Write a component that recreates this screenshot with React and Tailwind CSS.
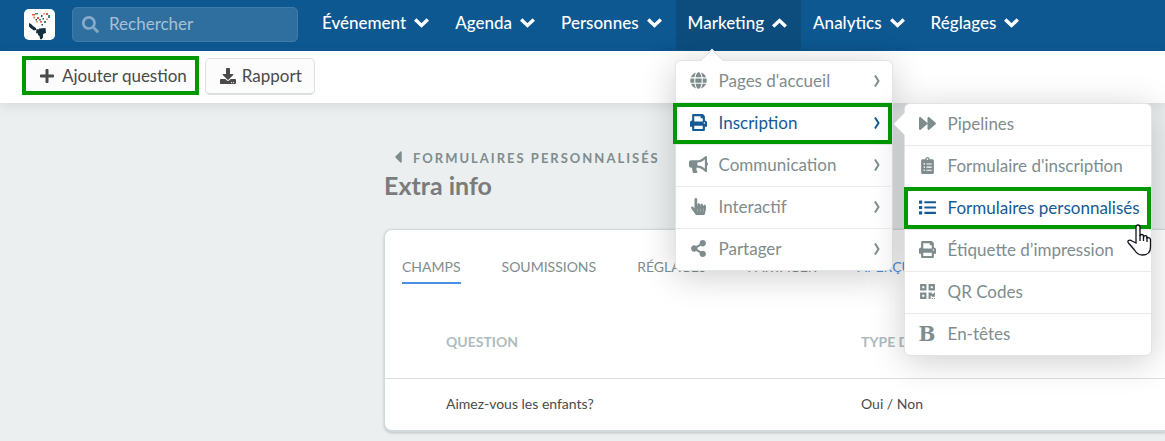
import { FaBullhorn, FaCaretLeft, FaClipboardList, FaDownload, FaForward, FaGlobe, FaHandPointer, FaList, FaPlus, FaPrint, FaQrcode, FaSearch, FaShareAlt } from 'react-icons/fa';
import clsx from 'clsx';

const navItems = ['Événement', 'Agenda', 'Personnes', 'Marketing', 'Analytics', 'Réglages'];

const marketingMenu = [
  { label: "Pages d'accueil", icon: FaGlobe },
  { label: 'Inscription', icon: FaPrint, active: true },
  { label: 'Communication', icon: FaBullhorn },
  { label: 'Interactif', icon: FaHandPointer },
  { label: 'Partager', icon: FaShareAlt },
];

const inscriptionMenu = [
  { label: 'Pipelines', icon: FaForward },
  { label: "Formulaire d'inscription", icon: FaClipboardList },
  { label: 'Formulaires personnalisés', icon: FaList, active: true },
  { label: 'Étiquette d’impression', icon: FaPrint },
  { label: 'QR Codes', icon: FaQrcode },
  { label: 'En-têtes', icon: BoldIcon },
];

const tabs = ['CHAMPS', 'SOUMISSIONS', 'RÉGLAGES', 'PARTAGER', 'APERÇU'];

function BoldIcon({ className }) {
  return (
    <span className={clsx(className, "text-center font-['DejaVu_Serif',serif] text-xl! leading-none font-bold")} aria-hidden="true">
      B
    </span>
  );
}

// Megaphone-headed figure with a heart-shaped cloud of coloured dots
function Logo() {
  return (
    <svg viewBox="0 0 31 31" className="size-[31px] shrink-0" role="img" aria-label="Accueil">
      <rect width="31" height="31" rx="5" fill="#fff" />
      <path d="M5 14l2 1 2 2 3 2v2l-2 .5-3-2-2-2z" fill="#14303f" />
      <path d="M12.500 20l2 .5 1-1 6-.5.5 5-2 .5-1 1v3l-1.500 2-1.500-.5-.5-3-1.500-1v-1.500l-2-.5z" fill="#14303f" />
      <g fill="#e4573c">
        <path d="M8 5h3v1.500H8zM22 4h2v2h-2zM13 8h2v2h-2zM16 12h2v1.500h-2z" />
      </g>
      <g fill="#3a8c7f">
        <path d="M11 4h3v1.500h-3zM24 6h2v3h-2zM15 10h2v1.500h-2zM20 12h2v2h-2z" />
      </g>
      <g fill="#d9a066">
        <path d="M9 7.500h2v2H9zM19 4h2v1.500h-2zM12 12h2v1.500h-2zM22 9.500h2v1.500h-2z" />
      </g>
      <g fill="#33475b">
        <path d="M11.500 10h1.500v1.500h-1.500zM17 6h1.500v2H17zM18.500 9h1.500v1.500h-1.500zM17.500 15H19v1.500h-1.500z" />
      </g>
    </svg>
  );
}

function Chevron({ up }) {
  return (
    <svg viewBox="0 0 15 10" className="h-[10px] w-[15px]" fill="none" stroke="currentColor" strokeWidth="3.4" aria-hidden="true">
      <path d={up ? 'M1.200 8.500L7.500 2.500L13.800 8.500' : 'M1.200 1.500L7.500 7.500L13.800 1.500'} />
    </svg>
  );
}

function HandCursor() {
  return (
    <svg viewBox="0 0 26 33" className="pointer-events-none absolute -right-px top-[36px] z-10 h-[33px] w-[26px]" aria-hidden="true">
      <path
        d="M10 19V3.500q0-2.500 2-2.500t2 2.500V12q0-1.500 1.700-1.500T17.500 12v1q.3-1.500 2-1.300T21 13.500v1q.5-1 1.800-.8T24.500 15.500V23q0 8-8 8-5 0-8-5L2.500 19q-1.500-2 .5-2.700 1.500-.5 3 .7z"
        fill="#fff"
        stroke="#10101c"
        strokeWidth="1.300"
      />
      <path d="M14 11v6M17.500 12v5M21 13v5" stroke="#10101c" strokeWidth="1.300" />
    </svg>
  );
}

function MenuItem({ item, children, arrow }) {
  const Icon = item.icon;
  return (
    <li className="relative border-b border-[#e6eaea] last:border-b-0">
      <a href="#" className={clsx('flex h-[41px] items-center px-3 pb-0.5', item.active ? 'text-[#135b96]' : 'text-[#7f8c8d]')}>
        <Icon className="mr-[10px] w-[21px] shrink-0 text-[17px]" />
        <span className="whitespace-nowrap">{item.label}</span>
        {arrow && (
          <svg viewBox="0 0 6 12" className="ml-auto h-3 w-[6px]" fill="none" stroke="currentColor" strokeWidth="2" aria-hidden="true">
            <path d="M1 .5L4.500 6L1 11.500" />
          </svg>
        )}
      </a>
      {children}
    </li>
  );
}

function MarketingMenu() {
  return (
    <div className="absolute -left-px top-[60px] z-20 w-[218px] rounded-md border border-[#e0e4e4] bg-white text-[17px] font-normal shadow-[0_5px_35px_rgba(0,0,0,0.2)]">
      <span className="absolute -top-[9px] left-[28px] size-4 rotate-45 border-l border-t border-[#e0e4e4] bg-white" />
      <ul className="relative">
        {marketingMenu.map((item) => (
          <MenuItem key={item.label} item={item} arrow>
            {item.active && (
              <>
                <span className="pointer-events-none absolute -left-[3px] right-0 top-0 h-[41px] border-4 border-[#009800]" />
                <InscriptionMenu />
              </>
            )}
          </MenuItem>
        ))}
      </ul>
    </div>
  );
}

function InscriptionMenu() {
  return (
    <div className="absolute left-full top-0 ml-3 w-[248px] rounded-md border border-[#e0e4e4] bg-white shadow-[0_5px_35px_rgba(0,0,0,0.2)]">
      <span className="absolute -left-[8px] top-3 size-4 rotate-45 bg-white" />
      <ul className="relative">
        {inscriptionMenu.map((item) => (
          <MenuItem key={item.label} item={item}>
            {item.active && (
              <>
                <span className="pointer-events-none absolute -left-px -top-px right-0 h-[42px] border-4 border-[#009800]" />
                <HandCursor />
              </>
            )}
          </MenuItem>
        ))}
      </ul>
    </div>
  );
}

function Header() {
  return (
    <header className="flex h-[51px] bg-[#0d5891] text-white">
      <div className="flex items-center pl-6 pb-[2px]">
        <Logo />
        <label className="ml-[17px] flex h-[35px] w-[226px] items-center rounded-[5px] border border-[#3f7cab] bg-[#2f6f9f] px-[9px]">
          <FaSearch className="shrink-0 text-[17px] text-[#86abc8]" aria-hidden="true" />
          <input type="search" aria-label="Rechercher" placeholder="Rechercher" className="ml-[10px] w-full min-w-0 bg-transparent pb-0.5 text-[17px] outline-none placeholder:text-[#a5c1d7]" />
        </label>
      </div>
      <nav className="ml-3 flex text-[17px] font-medium">
        {navItems.map((label) => {
          const open = label === 'Marketing';
          return (
            <div key={label} className="relative">
              <button type="button" aria-expanded={open} className={clsx('flex h-[50px] items-center gap-2 pb-1 pl-3 pr-[14px]', open && 'bg-[#0c4d7e]')}>
                {label}
                <Chevron up={open} />
              </button>
              {open && <MarketingMenu />}
            </div>
          );
        })}
      </nav>
    </header>
  );
}

export default function App() {
  return (
    <div className="min-h-screen overflow-hidden bg-[#ebeff0] font-['Lato',sans-serif]">
      <Header />
      <div className="flex h-[52px] items-end gap-[6px] bg-white pb-2 pl-[22px] text-[17px] text-[#4a4a4a] shadow-[0_2px_12px_rgba(0,0,0,0.1)]">
        <button type="button" className="flex h-[39px] items-center gap-[7px] border-4 border-[#009800] bg-[#fcfcfc] pl-[13px] pr-2">
          <FaPlus className="text-base" /> Ajouter question
        </button>
        <button type="button" className="flex h-[37px] items-center gap-[6px] rounded-[5px] border border-b-2 border-[#dcdfe0] bg-[#fcfcfc] pl-[14px] pr-3">
          <FaDownload className="text-base" /> Rapport
        </button>
      </div>
      <main className="pl-[384px] pt-[46px]">
        <a href="#" className="flex h-5 items-center text-[13px] font-bold tracking-[2px] text-[#7f8c8d]">
          <FaCaretLeft className="mb-1 ml-1 mr-[5px] text-xl" />
          FORMULAIRES PERSONNALISÉS
        </a>
        <h1 className="text-[25px] leading-8 font-bold text-[#7b7b7b]">Extra info</h1>
        <section className="mt-7 rounded-l-lg border border-b-2 border-r-0 border-[#d3dadb] bg-white shadow-[0_1px_3px_rgba(0,0,0,0.2)]">
          <nav className="flex gap-[41px] pl-[17px] pt-[27px] text-sm text-[#7f8c8d]">
            {tabs.map((tab, i) => (
              <a key={tab} href="#" className={clsx('pb-[5px]', i === 0 && 'border-b-2 border-[#4a90e2]', i === 4 && 'text-[#4a90e2]')}>
                {tab}
              </a>
            ))}
          </nav>
          <table className="mt-[22px] w-full table-fixed text-left text-sm">
            <colgroup>
              <col className="w-[476px]" />
              <col />
            </colgroup>
            <thead className="text-[#afbcbe]">
              <tr className="h-[72px] border-b border-[#dcdfe0]">
                <th className="pl-[61px]">QUESTION</th>
                <th>TYPE DE</th>
              </tr>
            </thead>
            <tbody className="text-[#4a4a4a]">
              <tr className="h-[52px]">
                <td className="pl-[61px]">Aimez-vous les enfants?</td>
                <td>Oui / Non</td>
              </tr>
            </tbody>
          </table>
        </section>
      </main>
    </div>
  );
}
